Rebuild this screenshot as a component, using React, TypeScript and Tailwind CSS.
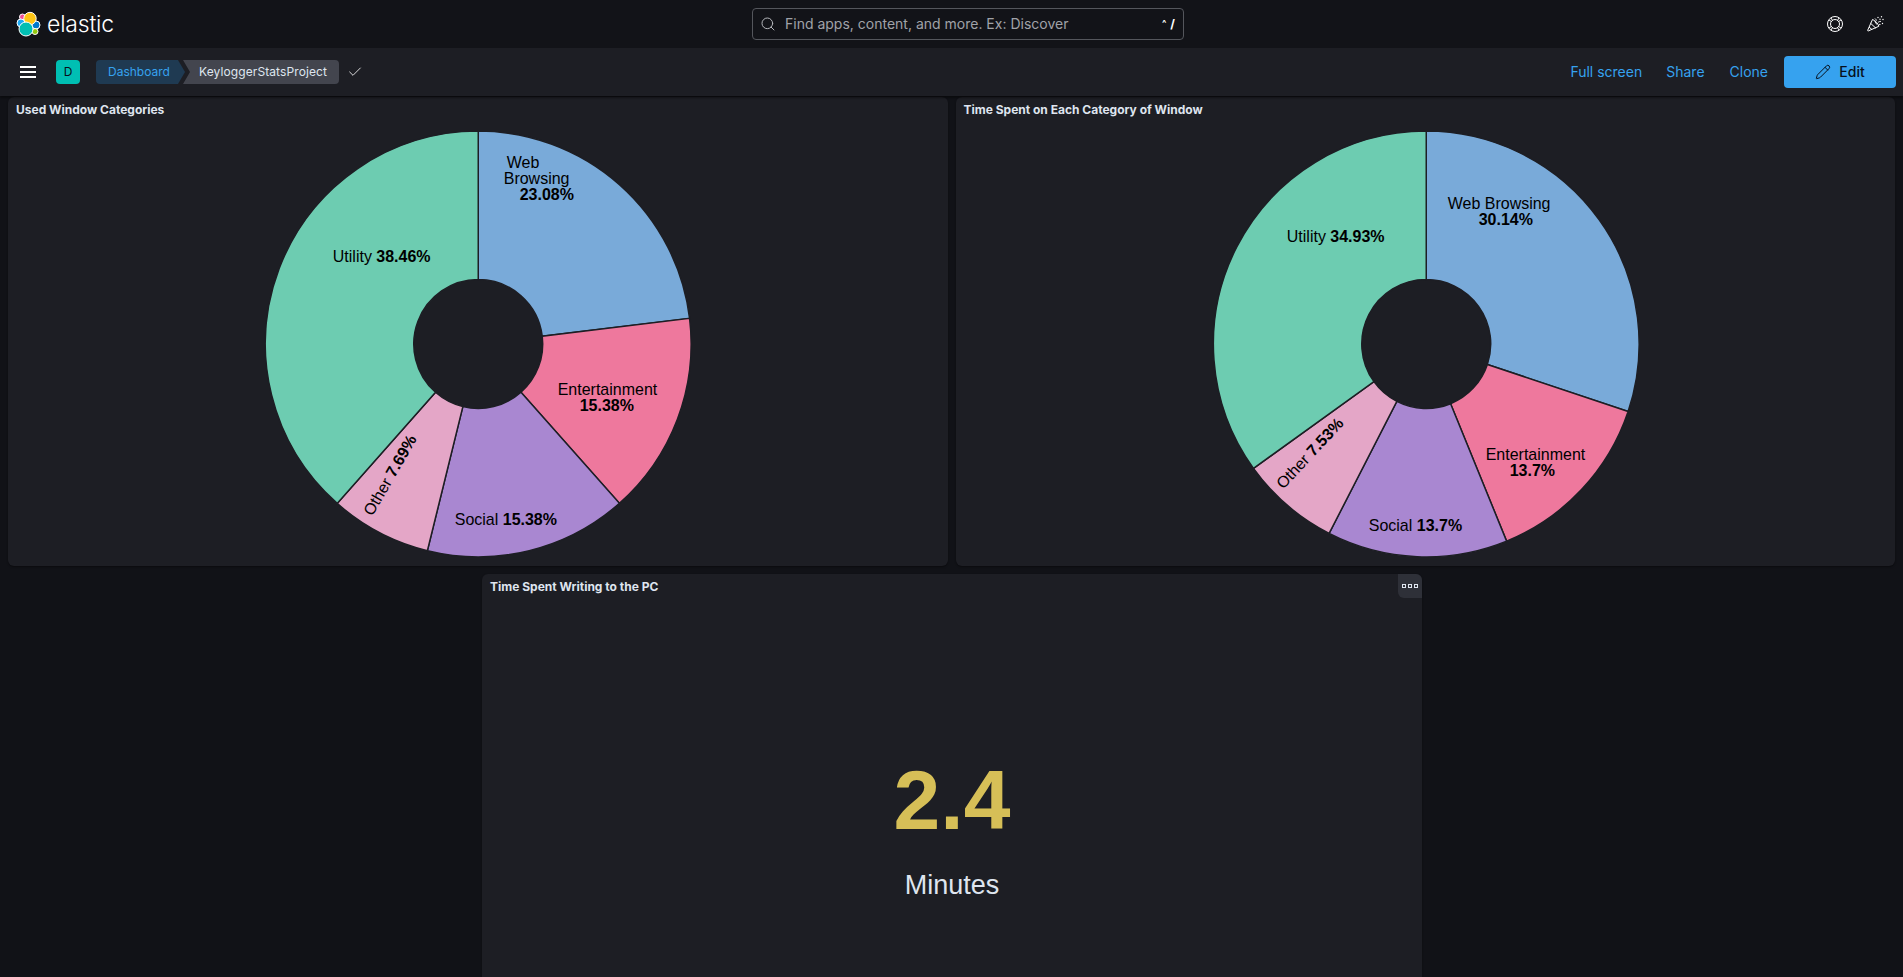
import { Check, Pencil, Search } from 'lucide-react';

interface Slice { pct: number; color: string; }
interface Label { x: number; y: number; name?: string; value?: string; rotate?: number; }

const COLORS = ['#79aad9', '#ee789d', '#a987d1', '#e4a6c7', '#6dccb1'];
const CX = 470.5;
const CY = 247;
const R = 213;
const HOLE = 64.5;

const point = (r: number, pct: number) => {
  const a = (pct / 100) * Math.PI * 2;
  return [CX + r * Math.sin(a), CY - r * Math.cos(a)];
};

function slicePath(from: number, to: number) {
  const [x1, y1] = point(R, from);
  const [x2, y2] = point(R, to);
  const [x3, y3] = point(HOLE, to);
  const [x4, y4] = point(HOLE, from);
  const large = to - from > 50 ? 1 : 0;
  return `M${x1} ${y1}A${R} ${R} 0 ${large} 1 ${x2} ${y2}L${x3} ${y3}A${HOLE} ${HOLE} 0 ${large} 0 ${x4} ${y4}Z`;
}

function Donut({ values, labels }: { values: number[]; labels: Label[] }) {
  const slices: Slice[] = values.map((pct, i) => ({ pct, color: COLORS[i] }));
  let total = 0;
  return (
    <svg viewBox="0 0 940 469" className="absolute inset-0 w-full h-full font-['Liberation_Sans',Arial,sans-serif] text-base">
      {slices.map((s, i) => {
        const d = slicePath(total, total + s.pct);
        total += s.pct;
        return <path key={i} d={d} fill={s.color} stroke="#1d1e24" strokeWidth={1.5} />;
      })}
      {labels.map((l, i) => (
        <text
          key={i}
          x={l.x}
          y={l.y}
          fill="#000"
          textAnchor={l.rotate !== undefined ? 'middle' : 'start'}
          transform={l.rotate !== undefined ? `rotate(${l.rotate} ${l.x} ${l.y})` : undefined}
        >
          {l.name}
          {l.name && l.value ? ' ' : ''}
          {l.value && <tspan fontWeight={700}>{l.value}</tspan>}
        </text>
      ))}
    </svg>
  );
}

function Panel({ title, className, children }: { title: string; className?: string; children?: React.ReactNode }) {
  return (
    <section className={`relative bg-[#1d1e24] rounded-md shadow-[0_1px_2px_rgba(0,0,0,0.4)] ${className ?? ''}`}>
      <h2 className="absolute z-10 left-2 top-[3px] text-xs leading-5 font-bold text-[#dfe5ef]">{title}</h2>
      {children}
    </section>
  );
}

const LEFT_LABELS: Label[] = [
  { x: 499, y: 71, name: 'Web' },
  { x: 496, y: 87, name: 'Browsing' },
  { x: 512, y: 103, value: '23.08%' },
  { x: 550, y: 298, name: 'Entertainment' },
  { x: 572, y: 314, value: '15.38%' },
  { x: 447, y: 428, name: 'Social', value: '15.38%' },
  { x: 387, y: 381, name: 'Other', value: '7.69%', rotate: -60 },
  { x: 325, y: 165, name: 'Utility', value: '38.46%' },
];

const RIGHT_LABELS: Label[] = [
  { x: 492, y: 112, name: 'Web Browsing' },
  { x: 523, y: 128, value: '30.14%' },
  { x: 530, y: 363, name: 'Entertainment' },
  { x: 554, y: 379, value: '13.7%' },
  { x: 413, y: 434, name: 'Social', value: '13.7%' },
  { x: 358, y: 360, name: 'Other', value: '7.53%', rotate: -47 },
  { x: 331, y: 145, name: 'Utility', value: '34.93%' },
];

function Logo() {
  return (
    <svg width="26" height="26" viewBox="0 0 26 26" className="shrink-0">
      <circle cx="7.5" cy="6" r="3" fill="#f04e98" stroke="#fff" />
      <circle cx="6" cy="12" r="4" fill="#1ba9f5" stroke="#fff" />
      <circle cx="21" cy="14" r="4" fill="#0077cc" stroke="#fff" />
      <circle cx="20" cy="20.5" r="3" fill="#93c90e" stroke="#fff" />
      <circle cx="15" cy="7.5" r="6.2" fill="#fec514" stroke="#fff" />
      <circle cx="11" cy="18" r="7" fill="#00bfb3" stroke="#fff" />
    </svg>
  );
}

// help ring, drawn because the lucide one has single spokes
function HelpIcon() {
  return (
    <svg width="16" height="16" viewBox="0 0 16 16" fill="none" stroke="currentColor" strokeWidth="1">
      <circle cx="8" cy="8" r="7.5" />
      <circle cx="8" cy="8" r="4.5" />
      <path d="M2 4l2.6 1.6M4 2l1.6 2.6M14 4l-2.6 1.6M12 2l-1.6 2.6M2 12l2.6-1.6M4 14l1.6-2.6M14 12l-2.6-1.6M12 14l-1.6-2.6" />
    </svg>
  );
}

function CheerIcon() {
  return (
    <svg width="17" height="16" viewBox="0 0 17 16" fill="none" stroke="currentColor" strokeWidth="1">
      <path d="M5.5 3.5L.7 14.2c-.2.5.2.9.7.7l10.4-4.6c-.6-2.6-3.6-6-6.3-6.8z" />
      <path d="M3.6 7.3l5.4 5M2 11l3 2.6M7.5 5.5c1 .8 1.8 1.8 2.3 3M8 2.5c.8.5 1.300 1.300 1.300 2.200M11 6.500c.9-.9 2-1.200 3-1" />
      <circle cx="11" cy="1.5" r=".7" fill="currentColor" stroke="none" />
      <circle cx="14.5" cy=".8" r=".7" fill="currentColor" stroke="none" />
      <circle cx="13" cy="3.2" r=".7" fill="currentColor" stroke="none" />
      <circle cx="16" cy="3.5" r=".7" fill="currentColor" stroke="none" />
      <circle cx="15.5" cy="7.5" r=".7" fill="currentColor" stroke="none" />
      <circle cx="12.8" cy="8.5" r=".7" fill="currentColor" stroke="none" />
    </svg>
  );
}

export default function App() {
  return (
    <div className="h-[977px] overflow-hidden bg-[#111217] font-['Inter',sans-serif]">
      <header className="h-12 flex items-center bg-[#121318] pl-[15px] pr-[19px]">
        <div className="w-[737px] flex items-center gap-[6px]">
          <Logo />
          <span className="text-[23px] font-light leading-none text-white tracking-[-0.2px]">elastic</span>
        </div>
        <div className="w-[432px] h-8 flex items-center rounded-[4px] border border-[#54565c] bg-[#121318] pl-[7px] pr-[8px]">
          <Search size={16} strokeWidth={1.5} className="text-[#b4b6bb]" />
          <span className="ml-[9px] text-sm text-[#a0a2a8]">Find apps, content, and more. Ex: Discover</span>
          <span className="ml-auto flex items-center gap-[4px] text-white font-bold leading-none">
            <span className="text-[9px] -mt-[3px]">^</span>
            <span className="text-xs">/</span>
          </span>
        </div>
        <div className="ml-auto flex items-center gap-[24px] text-white">
          <HelpIcon />
          <CheerIcon />
        </div>
      </header>

      <nav className="h-12 flex items-center bg-[#1d1e24] pl-5 pr-[7px] shadow-[0_2px_2px_rgba(0,0,0,0.4)] relative z-20">
        <svg width="16" height="12" viewBox="0 0 16 12" className="text-white" stroke="currentColor" strokeWidth="2">
          <path d="M0 1h16M0 6h16M0 11h16" />
        </svg>
        <div className="ml-5 w-6 h-6 rounded-[4px] bg-[#00bfb3] text-[#07101c] text-xs flex items-center justify-center">D</div>
        <div className="ml-4 h-6 flex items-center text-xs text-[#dfe5ef]">
          <span className="w-[89px] h-6 flex items-center pl-3 rounded-l-[4px] text-[#36a2ef] bg-[#1f3a52] [clip-path:polygon(0_0,calc(100%-7px)_0,100%_50%,calc(100%-7px)_100%,0_100%)]">
            Dashboard
          </span>
          <span className="-ml-[2px] h-6 flex items-center pl-4 pr-3 rounded-r-[4px] bg-[#43454e] tracking-[0.1px] [clip-path:polygon(0_0,100%_0,100%_100%,0_100%,7px_50%)]">
            KeyloggerStatsProject
          </span>
        </div>
        <Check size={16} strokeWidth={1.25} className="ml-2 text-white" />
        <div className="ml-auto flex items-center text-sm text-[#36a2ef]">
          <span>Full screen</span>
          <span className="ml-6">Share</span>
          <span className="ml-[25px]">Clone</span>
          <button className="ml-4 w-28 h-8 rounded-[4px] bg-[#36a2ef] text-[#07101c] font-medium flex items-center justify-center gap-2">
            <Pencil size={16} strokeWidth={1.5} />
            Edit
          </button>
        </div>
      </nav>

      <main className="px-2 pt-px">
        <div className="grid grid-cols-2 gap-2">
          <Panel title="Used Window Categories" className="h-[469px]">
            <Donut values={[23.08, 15.38, 15.38, 7.69, 38.47]} labels={LEFT_LABELS} />
          </Panel>
          <Panel title="Time Spent on Each Category of Window" className="h-[469px]">
            <Donut values={[30.14, 13.7, 13.7, 7.53, 34.93]} labels={RIGHT_LABELS} />
          </Panel>
        </div>
        <div className="mt-2 pl-px flex justify-center">
          <Panel title="Time Spent Writing to the PC" className="w-[940px] h-[469px] flex flex-col items-center">
            <div className="absolute right-0 top-0 w-6 h-6 rounded-bl-md rounded-tr-md bg-[#2e3038] flex items-center justify-center gap-[2px]">
              <i className="w-1 h-1 border border-[#dfe5ef]" />
              <i className="w-1 h-1 border border-[#dfe5ef]" />
              <i className="w-1 h-1 border border-[#dfe5ef]" />
            </div>
            <div className="mt-[178px] text-[84px] leading-[96px] font-bold text-[#d6bf57] font-['Liberation_Sans',Arial,sans-serif]">2.4</div>
            <div className="mt-[21px] text-[27px] leading-8 text-[#dfe5ef] font-['Liberation_Sans',Arial,sans-serif]">Minutes</div>
          </Panel>
        </div>
      </main>
    </div>
  );
}
